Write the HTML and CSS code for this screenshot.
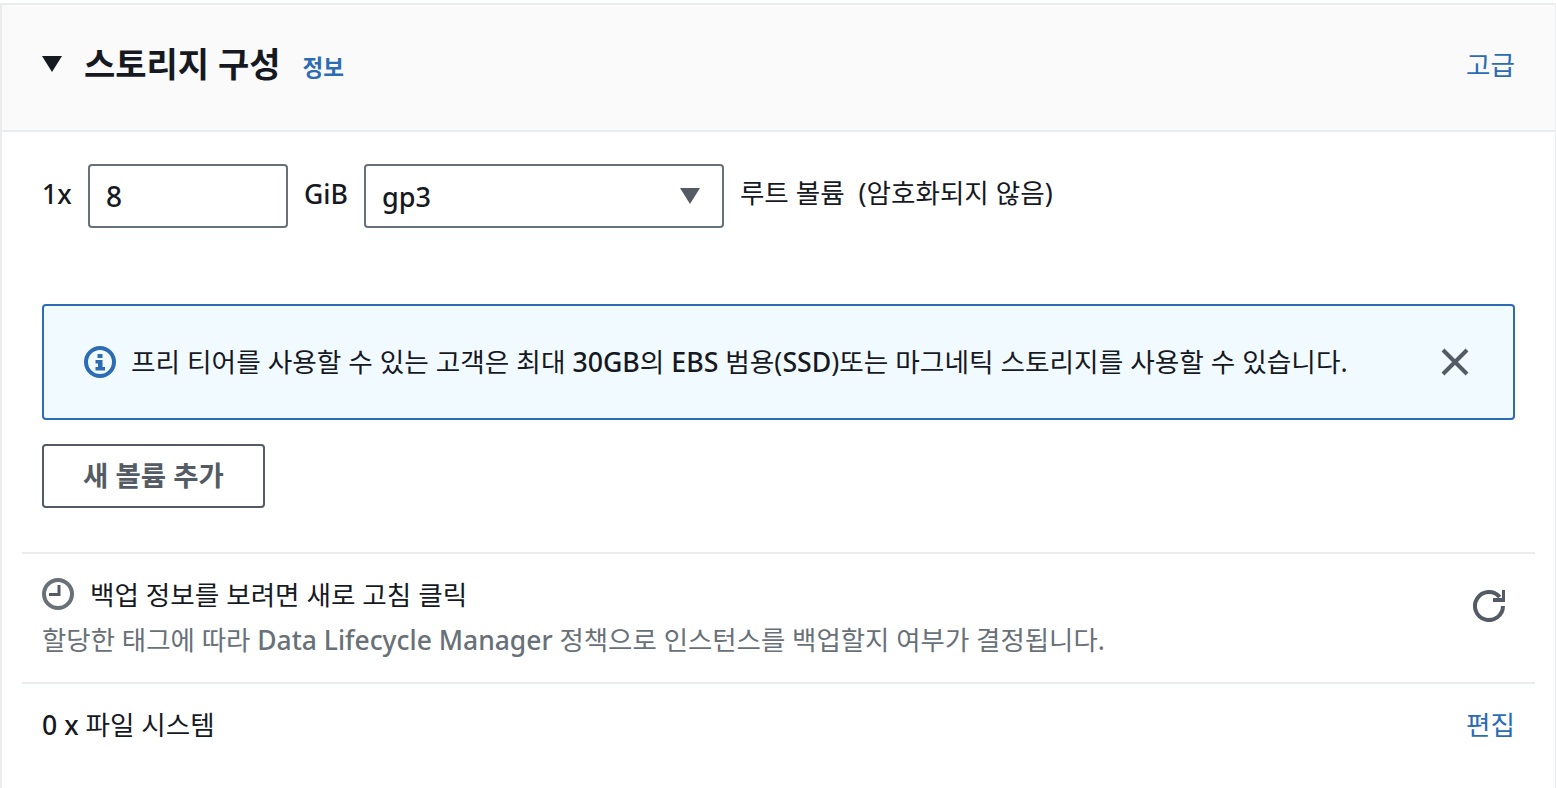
FILE: index.html
```html
<!DOCTYPE html>
<html lang="ko">
  <head>
    <meta charset="UTF-8" />
    <title>스토리지 구성</title>
    <link rel="stylesheet" href="styles.css">
  </head>
  <body>
    <div class="panel">
      <div class="panel_head">
        <div class="head_left">
          <svg class="caret" width="20" height="16" viewBox="0 0 20 16"><path d="M0 0H20L10 16Z" fill="#16191f"/></svg>
          <h2 class="title">스토리지 구성</h2>
          <a class="info_link">정보</a>
        </div>
        <a class="link">고급</a>
      </div>
      <div class="panel_body">
        <div class="volume_row">
          <span class="volume_count latin">1x</span>
          <div class="field size_field">8</div>
          <span class="volume_unit latin">GiB</span>
          <div class="field type_field">
            <span>gp3</span>
            <svg width="20" height="16" viewBox="0 0 20 16"><path d="M0 0H20L10 16Z" fill="#545b64"/></svg>
          </div>
          <span class="volume_note">루트 볼륨&nbsp; (암호화되지 않음)</span>
        </div>
        <div class="alert">
          <svg class="alert_icon" width="32" height="32" viewBox="0 0 32 32">
            <circle cx="16" cy="16" r="14" fill="none" stroke="#2b6cb5" stroke-width="4"/>
            <rect x="13.5" y="8" width="5" height="4" fill="#2b6cb5"/>
            <path d="M11.5 14H18.5V21H21V24.5H11.5V21H14V17.5H11.5Z" fill="#2b6cb5"/>
          </svg>
          <span class="alert_text">프리 티어를 사용할 수 있는 고객은 최대 <span class="latin">30GB</span>의 <span class="latin">EBS</span> 범용(<span class="latin">SSD</span>)또는 마그네틱 스토리지를 사용할 수 있습니다.</span>
          <svg class="alert_close" width="28" height="28" viewBox="0 0 28 28"><path d="M2 2L26 26M26 2L2 26" stroke="#545b64" stroke-width="4" fill="none"/></svg>
        </div>
        <button class="add_button">새 볼륨 추가</button>
      </div>
      <div class="section backup">
        <div>
          <div class="backup_title">
            <svg width="32" height="32" viewBox="0 0 32 32">
              <circle cx="16" cy="16" r="14" fill="none" stroke="#687078" stroke-width="4"/>
              <path d="M17 7V16.5H7" fill="none" stroke="#545b64" stroke-width="3"/>
            </svg>
            <span>백업 정보를 보려면 새로 고침 클릭</span>
          </div>
          <div class="backup_desc">할당한 태그에 따라 <span class="latin">Data Lifecycle Manager</span> 정책으로 인스턴스를 백업할지 여부가 결정됩니다.</div>
        </div>
        <svg class="refresh" width="32" height="32" viewBox="0 0 32 32">
          <path d="M26.7 7A14 14 0 1 0 30 16" fill="none" stroke="#545b64" stroke-width="4"/>
          <path d="M32 0V12H20V8H29V0Z" fill="#545b64"/>
        </svg>
      </div>
      <div class="section files">
        <span><span class="latin">0 x</span> 파일 시스템</span>
        <a class="link">편집</a>
      </div>
    </div>
  </body>
</html>
```
FILE: styles.css
```css
* {
  margin: 0;
  padding: 0;
  box-sizing: border-box;
}
html, body {
  height: 100%;
  overflow: hidden;
  background-color: white;
}
body {
  font-family: "Noto Sans", "Noto Sans CJK KR", sans-serif;
  font-size: 26.6px;
  color: #16191f;
}
.latin {
  font-weight: 500;
}
.panel {
  height: 788px;
  margin-top: 3px;
  border: 2px solid #eaeded;
  border-bottom: none;
  border-right-width: 1px;
}
.panel_head {
  display: flex;
  justify-content: space-between;
  align-items: center;
  height: 127px;
  padding: 0 40px 8px;
  background-color: #fafafa;
  border-bottom: 2px solid #eaeded;
}
.head_left {
  display: flex;
  align-items: center;
}
.caret {
  margin-right: 22px;
}
.title {
  font-size: 34px;
  font-weight: 700;
  line-height: 44px;
  margin-right: 22px;
}
.info_link {
  font-size: 22.5px;
  font-weight: 700;
  color: #2b6cb5;
  margin-top: 6px;
}
.link {
  color: #2b6cb5;
}
.panel_body {
  padding: 32px 40px 0;
}
.volume_row {
  display: flex;
  align-items: flex-start;
  height: 64px;
}
.volume_count {
  line-height: 60px;
  width: 46px;
}
.field {
  display: flex;
  align-items: center;
  height: 64px;
  padding: 0 22px 0 16px;
  border: 2px solid #687078;
  border-radius: 4px;
  font-size: 28px;
  font-weight: 500;
}
.size_field {
  width: 200px;
}
.volume_unit {
  line-height: 60px;
  margin: 0 16px;
}
.type_field {
  width: 360px;
  justify-content: space-between;
  font-size: 27px;
}
.volume_note {
  line-height: 58px;
  margin-left: 16px;
}
.alert {
  display: flex;
  align-items: center;
  height: 116px;
  margin-top: 76px;
  padding: 0 44px 0 40px;
  background-color: #f1faff;
  border: 2px solid #2b6cb5;
  border-radius: 4px;
}
.alert_icon {
  margin-right: 15px;
}
.alert_text {
  flex: 1;
  padding-bottom: 4px;
  font-size: 26.7px;
}
.add_button {
  display: block;
  width: 223px;
  height: 64px;
  margin-top: 24px;
  padding-bottom: 4px;
  background-color: white;
  border: 2px solid #545b64;
  border-radius: 4px;
  font-family: inherit;
  font-size: 27.5px;
  font-weight: 700;
  color: #545b64;
}
.section {
  display: flex;
  justify-content: space-between;
  align-items: center;
  margin: 0 20px;
  padding: 0 20px;
  border-top: 2px solid #eaeded;
}
.backup {
  height: 130px;
  margin-top: 44px;
  padding-bottom: 4px;
}
.backup_title {
  display: flex;
  align-items: center;
  gap: 16px;
}
.backup_desc {
  margin-top: 6px;
  font-size: 26.45px;
  color: #687078;
}
.refresh {
  margin: 0 10px 20px 0;
}
.files {
  height: 86px;
  padding-bottom: 6px;
}
```
